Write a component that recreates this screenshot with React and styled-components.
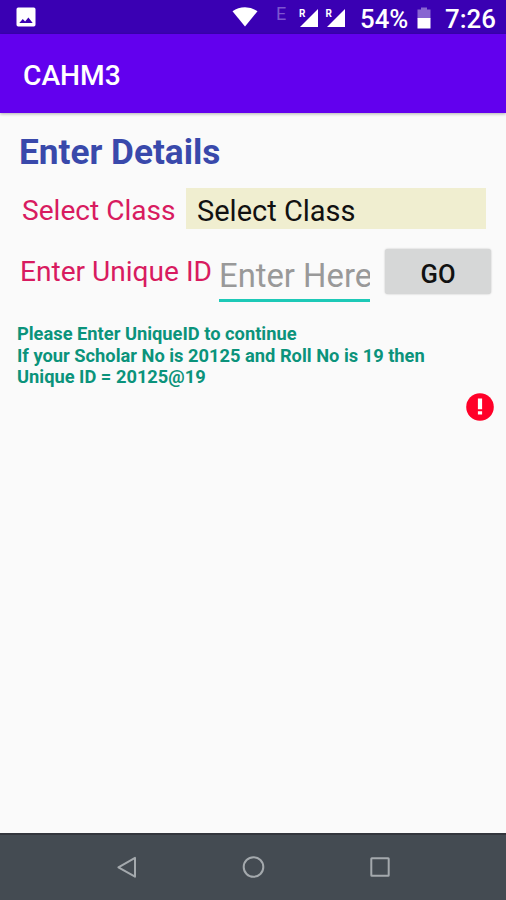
import React from "react";

import styled, { createGlobalStyle } from "styled-components";

const App = () => {
    return (
        <Screen>
            <GlobalStyle />
            <StatusBar>
                <ImageIcon viewBox="0 0 20 20">
                    <path fillRule="evenodd" d="M2.2 0.5h15.6q1.7 0 1.7 1.7v15.6q0 1.7-1.7 1.7H2.2q-1.7 0-1.7-1.7V2.2Q0.5 0.5 2.2 0.5zM3.3 16h13.4l-4.3-5.5-3.3 4.1-2.3-2.7z" />
                </ImageIcon>
                <WifiIcon viewBox="0 0 26 20">
                    <path d="M0.5 4.2Q6 0.3 13 0.3T25.5 4.2L13 19.5z" />
                </WifiIcon>
                <NetworkType>E</NetworkType>
                <Signal />
                <Signal />
                <StatusText $width={47} $gap={8}>54%</StatusText>
                <BatteryIcon viewBox="0 0 14 22">
                    <path opacity="0.4" d="M4 0.5h6v2h3.5v9h-13v-9H4z" />
                    <path d="M0.5 11h13v10.5h-13z" />
                </BatteryIcon>
                <StatusText $width={52} $gap={14}>7:26</StatusText>
            </StatusBar>

            <AppBar>CAHM3</AppBar>

            <Content>
                <Title>Enter Details</Title>

                <ClassRow>
                    <Label $width={164}>Select Class</Label>
                    <ClassSelect>Select Class</ClassSelect>
                </ClassRow>

                <IdRow>
                    <Label $width={199}>Enter Unique ID</Label>
                    <IdInput placeholder="Enter Here" />
                    <GoButton>GO</GoButton>
                </IdRow>

                <Note>
                    Please Enter UniqueID to continue<br />
                    If your Scholar No is 20125 and Roll No is 19 then<br />
                    Unique ID = 20125@19
                </Note>

                <ErrorIcon viewBox="0 0 28 28">
                    <circle cx="14" cy="14" r="13.8" fill="#ff0028" />
                    <path fill="#fff" d="M11.9 5.5h4.2v10.8h-4.2zM11.9 18.3h4.2v3.3h-4.2z" />
                </ErrorIcon>
            </Content>

            <NavBar>
                <NavIcon viewBox="0 0 24 24">
                    <path d="M21 2.9v18.8L4.4 12.3z" />
                </NavIcon>
                <NavIcon viewBox="0 0 24 24">
                    <circle cx="12.5" cy="12" r="9.8" />
                </NavIcon>
                <NavIcon viewBox="0 0 24 24">
                    <rect x="3.3" y="3.3" width="17.4" height="17.4" rx="0.5" />
                </NavIcon>
            </NavBar>
        </Screen>
    );
}

// Signal strength triangle with the roaming mark
const Signal = () => (
    <SignalBox>
        <Roaming>R</Roaming>
        <SignalIcon viewBox="0 0 18 18">
            <path d="M18 0v18H0z" />
        </SignalIcon>
    </SignalBox>
);

export default App;


const GlobalStyle = createGlobalStyle`
    * {
        box-sizing: border-box;
    }
    body {
        margin: 0;
        font-family: Roboto, "Liberation Sans", sans-serif;
    }
`

const Screen = styled.div`
    display: flex;
    flex-direction: column;
    width: 506px;
    height: 900px;
    overflow: hidden;
    background: #fafafa;
`

const StatusBar = styled.div`
    display: flex;
    flex: none;
    height: 34px;
    padding-left: 16px;
    background: #3a00b3;
    color: #fff;
    white-space: nowrap;

    svg {
        flex: none;
        fill: currentColor;
    }
`

const ImageIcon = styled.svg`
    width: 20px;
    height: 20px;
    margin-top: 7px;
`

const WifiIcon = styled.svg`
    width: 26px;
    height: 20px;
    margin: 7px 0 0 196px;
`

const NetworkType = styled.span`
    width: 23px;
    margin: 4px 0 0 18px;
    font-size: 18px;
    line-height: 20px;
    color: #7d55d0;
`

const SignalBox = styled.div`
    display: flex;
    width: 26.5px;
    margin-top: 9px;
`

const Roaming = styled.span`
    width: 1px;
    font-size: 10px;
    font-weight: 700;
    line-height: 10px;
`

const SignalIcon = styled.svg`
    width: 18px;
    height: 18px;
`

const StatusText = styled.span`
    width: ${(props) => props.$width}px;
    margin-left: ${(props) => props.$gap}px;
    font-size: 25.8px;
    font-weight: 500;
    line-height: 39px;
`

const BatteryIcon = styled.svg`
    width: 14px;
    height: 22px;
    margin: 7px 0 0 10px;
`

const AppBar = styled.header`
    flex: none;
    z-index: 1;
    height: 79px;
    padding-left: 23px;
    background: #6200ee;
    box-shadow: 0 1px 3px rgba(0, 0, 0, 0.3);
    color: #fff;
    font-size: 28.2px;
    font-weight: 500;
    line-height: 83px;
`

const Content = styled.main`
    display: flex;
    flex: 1;
    flex-direction: column;
    padding: 17px 12px 0 18px;
`

const Title = styled.h1`
    margin: 0 0 0 1px;
    font-size: 35.2px;
    font-weight: 700;
    line-height: 44px;
    color: #3949ab;
`

const ClassRow = styled.div`
    display: flex;
    margin: 14px 8px 0 4px;
`

const Label = styled.label`
    flex: none;
    width: ${(props) => props.$width}px;
    font-size: 28.1px;
    line-height: 45px;
    color: #d81b60;
    white-space: nowrap;
`

const ClassSelect = styled.div`
    flex: 1;
    height: 41px;
    padding-left: 11px;
    background: #f0eed0;
    font-size: 29px;
    line-height: 46px;
    color: #111;
`

const IdRow = styled.div`
    display: flex;
    margin: 16px 3px 0 2px;
`

const IdInput = styled.input`
    width: 151px;
    height: 53px;
    margin-right: 15px;
    padding: 4px 0 0;
    border: 0;
    border-bottom: 3px solid #1dc9b7;
    outline: 0;
    background: none;
    font-family: inherit;
    font-size: 32.8px;

    &::placeholder {
        color: #999;
    }
`

const GoButton = styled.button`
    width: 106px;
    height: 45px;
    padding: 5px 0 0;
    border: 0;
    border-radius: 3px;
    background: #d6d7d7;
    box-shadow: 0 0 2px rgba(0, 0, 0, 0.25);
    font-family: inherit;
    font-size: 25.5px;
    font-weight: 500;
    color: #111;
`

const Note = styled.p`
    margin: 21px 0 0 -1px;
    font-size: 18.3px;
    font-weight: 700;
    line-height: 21.6px;
    color: #0b937b;
    white-space: nowrap;
`

const ErrorIcon = styled.svg`
    align-self: flex-end;
    width: 28px;
    height: 28px;
    margin-top: 5px;
`

const NavBar = styled.nav`
    display: flex;
    flex: none;
    justify-content: center;
    gap: 102.5px;
    height: 67px;
    padding-top: 19.5px;
    border-top: 2px solid #33363d;
    background: #444b52;
`

const NavIcon = styled.svg`
    width: 24px;
    height: 24px;
    margin-left: 0.5px;
    fill: none;
    stroke: #a4a9ad;
    stroke-width: 2;
    stroke-linejoin: round;
`
